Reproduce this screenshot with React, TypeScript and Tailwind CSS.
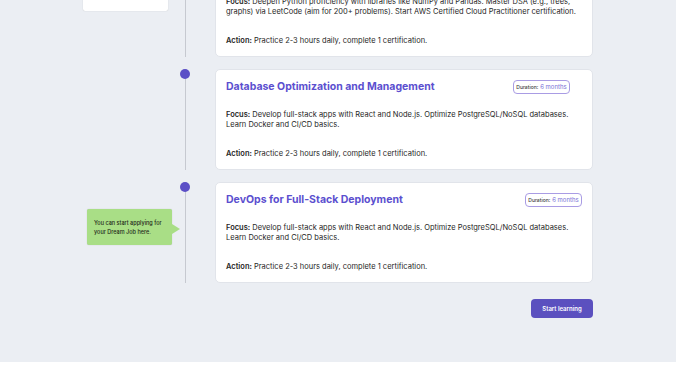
import React from "react";

type Step = {
  title: string;
  months: string;
  focus: string;
  action: string;
  badgeOffset?: string;
  note?: { text: string; tone: "white" | "green"; top: string };
};

const STEPS: Step[] = [
  {
    title: "Advanced Python and Problem Solving",
    months: "6 months",
    focus:
      "Deepen Python proficiency with libraries like NumPy and Pandas. Master DSA (e.g., trees, graphs) via LeetCode (aim for 200+ problems). Start AWS Certified Cloud Practitioner certification.",
    action: "Practice 2-3 hours daily, complete 1 certification.",
    note: { text: "Build a strong base before moving on.", tone: "white", top: "mt-[17px]" },
  },
  {
    title: "Database Optimization and Management",
    months: "6 months",
    focus:
      "Develop full-stack apps with React and Node.js. Optimize PostgreSQL/NoSQL databases. Learn Docker and CI/CD basics.",
    action: "Practice 2-3 hours daily, complete 1 certification.",
    badgeOffset: "mr-[12px]",
  },
  {
    title: "DevOps for Full-Stack Deployment",
    months: "6 months",
    focus:
      "Develop full-stack apps with React and Node.js. Optimize PostgreSQL/NoSQL databases. Learn Docker and CI/CD basics.",
    action: "Practice 2-3 hours daily, complete 1 certification.",
    note: { text: "You can start applying for your Dream Job here.", tone: "green", top: "mt-[27px]" },
  },
];

function Note({ note }: { note: NonNullable<Step["note"]> }) {
  const green = note.tone === "green";
  return (
    <div className={`relative ${note.top} ${green ? "ml-[4px]" : ""} w-[85px]`}>
      <div
        className={`rounded-[2px] px-[7px] text-[5.5px] font-medium leading-[9px] text-[#1f2a1a] shadow-[0_0_1px_rgba(0,0,0,0.25)] ${
          green ? "bg-[#a9de86] pb-[8px] pt-[10px]" : "bg-white pb-[12px] pt-[8px]"
        }`}
      >
        {note.text}
      </div>
      <div
        className={`absolute right-[-8px] top-[15px] h-0 w-0 border-y-[5px] border-l-[8px] border-y-transparent ${
          green ? "border-l-[#a9de86]" : "border-l-white"
        }`}
      />
    </div>
  );
}

function Card({ step }: { step: Step }) {
  return (
    <div className="w-[378px] rounded-[5px] border border-[#e1e4ea] bg-white px-[10px] pb-[10px] pt-[10px] text-[7.5px] leading-[10px] text-[#262626]">
      <div className="flex h-[14px] items-center justify-between">
        <h3 className="text-[10.5px] font-bold leading-[14px] text-[#5b4fcf]">{step.title}</h3>
        <span
          className={`flex h-[14px] w-[57px] items-center justify-center rounded-[4px] border border-[#a99ce4] text-[5px] leading-none ${
            step.badgeOffset || ""
          }`}
        >
          <span className="font-medium text-[#3a3a3a]">Duration:</span>
          <span className="ml-[2px] text-[6px] text-[#7a6fd6]">{step.months}</span>
        </span>
      </div>
      <p className="mt-[16px]">
        <span className="font-semibold">Focus:</span> {step.focus}
      </p>
      <p className="mt-[19px]">
        <span className="font-semibold">Action:</span> {step.action}
      </p>
    </div>
  );
}

export default function App() {
  return (
    <div className="min-h-[384px] bg-white font-['Inter','Liberation_Sans',sans-serif]">
      <div className="h-[362px] overflow-hidden bg-[#ebeef3]">
        <div className="mx-auto -mt-[44px] w-[510px]">
          {STEPS.map((step, i) => (
            <div key={i} className={`flex ${i < STEPS.length - 1 ? "pb-[12px]" : ""}`}>
              <div className="w-[90px]">{step.note && <Note note={step.note} />}</div>
              <div className="relative w-[24px]">
                <div className="absolute bottom-0 left-[11.5px] top-0 w-px bg-[#c6c9d0]" />
                <div className="absolute left-[7px] top-0 h-[10px] w-[10px] rounded-full bg-[#5b4fc6]" />
              </div>
              <div className="ml-[18px]">
                <Card step={step} />
              </div>
            </div>
          ))}
          <div className="mt-[16px] flex justify-end">
            <button
              type="button"
              className="h-[19px] w-[62px] rounded-[4px] bg-[#5b50bf] text-[6px] font-semibold text-white"
            >
              Start learning
            </button>
          </div>
        </div>
      </div>
    </div>
  );
}
